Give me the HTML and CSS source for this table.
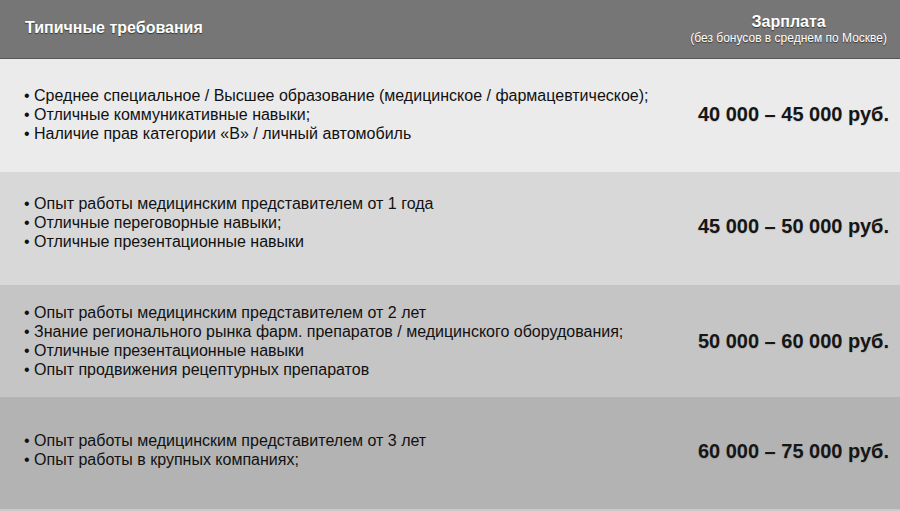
FILE: index.html
```html
<!DOCTYPE html>
<html lang="ru">
<head>
<meta charset="utf-8">
<link rel="stylesheet" href="styles.css">
</head>
<body>
<div class="table">
  <div class="head">
    <div class="head-title">Типичные требования</div>
    <div class="head-salary">
      <div class="head-salary-title">Зарплата</div>
      <div class="head-salary-sub">(без бонусов в среднем по Москве)</div>
    </div>
  </div>
  <div class="row row-1">
    <ul class="reqs">
      <li>• Среднее специальное / Высшее образование (медицинское / фармацевтическое);</li>
      <li>• Отличные коммуникативные навыки;</li>
      <li>• Наличие прав категории «В» / личный автомобиль</li>
    </ul>
    <div class="salary">40 000 – 45 000 руб.</div>
  </div>
  <div class="row row-2">
    <ul class="reqs">
      <li>• Опыт работы медицинским представителем от 1 года</li>
      <li>• Отличные переговорные навыки;</li>
      <li>• Отличные презентационные навыки</li>
    </ul>
    <div class="salary">45 000 – 50 000 руб.</div>
  </div>
  <div class="row row-3">
    <ul class="reqs">
      <li>• Опыт работы медицинским представителем от 2 лет</li>
      <li>• Знание регионального рынка фарм. препаратов / медицинского оборудования;</li>
      <li>• Отличные презентационные навыки</li>
      <li>• Опыт продвижения рецептурных препаратов</li>
    </ul>
    <div class="salary">50 000 – 60 000 руб.</div>
  </div>
  <div class="row row-4">
    <ul class="reqs">
      <li>• Опыт работы медицинским представителем от 3 лет</li>
      <li>• Опыт работы в крупных компаниях;</li>
    </ul>
    <div class="salary">60 000 – 75 000 руб.</div>
  </div>
</div>
</body>
</html>
```

FILE: styles.css
```css
html, body {
  margin: 0;
  padding: 0;
}
body {
  width: 900px;
  height: 511px;
  overflow: hidden;
  font-family: "Liberation Sans", Arial, sans-serif;
  background: #b3b3b3;
}
.table {
  display: flex;
  flex-direction: column;
  width: 900px;
  height: 511px;
}
.head {
  height: 58px;
  flex: none;
  background: #757675;
  border-bottom: 1px solid #555655;
  display: flex;
  align-items: center;
  justify-content: space-between;
  color: #fff;
  text-shadow: 0 1px 1px rgba(0,0,0,0.55);
}
.head-title {
  padding-left: 25px;
  padding-bottom: 3px;
  font-weight: bold;
  font-size: 16px;
}
.head-salary {
  padding-right: 13px;
  text-align: center;
}
.head-salary-title {
  font-weight: bold;
  font-size: 16px;
  line-height: 18px;
}
.head-salary-sub {
  font-size: 12px;
  line-height: 15px;
}
.row {
  flex: none;
  display: flex;
  align-items: center;
  justify-content: space-between;
  color: #111;
}
.row-1 { height: 113px; background: #ebebeb; }
.row-2 { height: 113px; background: #d8d8d8; }
.row-3 { height: 112px; background: #c5c5c5; }
.row-4 { height: 112px; background: #b3b3b3; border-bottom: 2px solid #c9c9c9; }
.reqs {
  list-style: none;
  margin: 0;
  padding: 0 0 0 24px;
  font-size: 16px;
  line-height: 19px;
}
.row-1 .reqs { padding-bottom: 2px; }
.row-2 .reqs { padding-bottom: 12px; }
.row-3 .reqs { padding-bottom: 0; }
.row-4 .reqs { padding-bottom: 6px; }
.salary {
  padding-right: 11px;
  font-weight: bold;
  font-size: 20px;
  color: #161616;
  text-shadow: 0 1px 1px rgba(0,0,0,0.12);
}
.row-1 .salary { padding-bottom: 2px; }
.row-2 .salary { padding-bottom: 4px; }
.row-4 .salary { padding-bottom: 4px; }
```
